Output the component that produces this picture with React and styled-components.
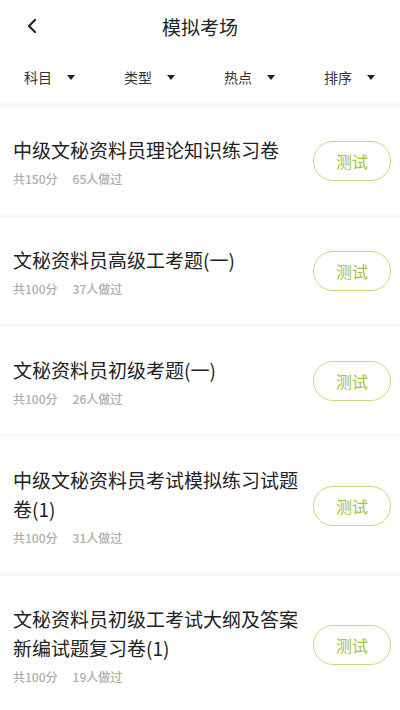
import React from "react";
import styled, { createGlobalStyle } from "styled-components";

const GlobalStyle = createGlobalStyle`
  html, body {
    margin: 0;
    padding: 0;
    background: #ffffff;
  }
  body {
    font-family: "Noto Sans CJK SC", "Noto Sans", sans-serif;
    color: #222;
  }
`;

const Page = styled.div`
  width: 400px;
  min-height: 710px;
  background: #f8f8f8;
`;

const Header = styled.div`
  background: #fff;
`;

const TitleBar = styled.div`
  height: 52px;
  display: flex;
  align-items: center;
  justify-content: center;
  position: relative;
`;

const BackButton = styled.button`
  position: absolute;
  left: 20px;
  top: 12px;
  width: 24px;
  height: 28px;
  border: none;
  background: none;
  padding: 0;
  display: flex;
  align-items: center;
  justify-content: center;
`;

const Title = styled.h1`
  margin: 0;
  font-size: 19px;
  font-weight: 400;
  color: #222;
`;

const FilterRow = styled.div`
  height: 50px;
  display: grid;
  grid-template-columns: repeat(4, 1fr);
  align-items: center;
`;

const FilterItem = styled.div`
  display: flex;
  align-items: center;
  gap: 15px;
  padding-left: 24px;
  font-size: 14px;
  color: #333;
`;

const Caret = styled.span`
  width: 0;
  height: 0;
  border-left: 4.5px solid transparent;
  border-right: 4.5px solid transparent;
  border-top: 5px solid #222;
  margin-top: 1px;
`;

const List = styled.div`
  display: flex;
  flex-direction: column;
  gap: 3px;
  padding-top: 5px;
`;

const Card = styled.div`
  background: #fff;
  display: flex;
  align-items: center;
  padding: 28px 9px 27px 13px;
`;

const Info = styled.div`
  flex: 1;
  max-width: 290px;
`;

const ItemTitle = styled.div`
  font-size: 19px;
  line-height: 29px;
  color: #222;
`;

const Meta = styled.div`
  margin-top: 7px;
  display: flex;
  gap: 15px;
  font-size: 12px;
  line-height: 16px;
  font-weight: 500;
  color: #adadad;
`;

const TestButton = styled.button`
  margin-left: auto;
  width: 78px;
  height: 40px;
  border-radius: 20px;
  border: 1.5px solid #c9d878;
  background: #fff;
  color: #a7c03c;
  font-family: "Noto Sans CJK SC", sans-serif;
  font-size: 16px;
  padding: 0;
  flex-shrink: 0;
`;

const exams = [
  { title: "中级文秘资料员理论知识练习卷", score: 150, count: 65 },
  { title: "文秘资料员高级工考题(一)", score: 100, count: 37 },
  { title: "文秘资料员初级考题(一)", score: 100, count: 26 },
  { title: "中级文秘资料员考试模拟练习试题卷(1)", score: 100, count: 31 },
  { title: "文秘资料员初级工考试大纲及答案新编试题复习卷(1)", score: 100, count: 19 },
];

const filters = ["科目", "类型", "热点", "排序"];

const App = () => {
  return (
    <>
      <GlobalStyle />
      <Page>
        <Header>
          <TitleBar>
            <BackButton aria-label="back">
              <svg width="12" height="16" viewBox="0 0 12 16">
                <polyline
                  points="9,2 3,8 9,14"
                  fill="none"
                  stroke="#222"
                  strokeWidth="2.2"
                  strokeLinecap="round"
                  strokeLinejoin="round"
                />
              </svg>
            </BackButton>
            <Title>模拟考场</Title>
          </TitleBar>
          <FilterRow>
            {filters.map((f) => (
              <FilterItem key={f}>
                {f}
                <Caret />
              </FilterItem>
            ))}
          </FilterRow>
        </Header>
        <List>
          {exams.map((e) => (
            <Card key={e.title}>
              <Info>
                <ItemTitle>{e.title}</ItemTitle>
                <Meta>
                  <span>共{e.score}分</span>
                  <span>{e.count}人做过</span>
                </Meta>
              </Info>
              <TestButton>测试</TestButton>
            </Card>
          ))}
        </List>
      </Page>
    </>
  );
};

export default App;
